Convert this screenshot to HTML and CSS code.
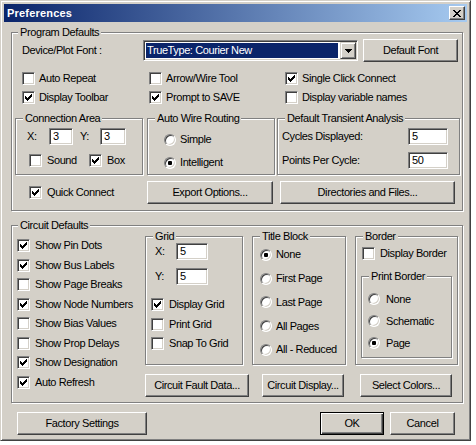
FILE: index.html
```html
<!DOCTYPE html>
<html>
<head>
<meta charset="utf-8">
<title>Preferences</title>
<link rel="stylesheet" href="styles.css">
</head>
<body>
<div class="window">
  <div class="titlebar">
    <span class="title">Preferences</span>
    <span class="close"><svg width="8" height="7" viewBox="0 0 8 7" shape-rendering="crispEdges"><path d="M0 0h2v1h-2zM6 0h2v1h-2zM1 1h2v1h-2zM5 1h2v1h-2zM2 2h4v1h-4zM3 3h2v1h-2zM2 4h4v1h-4zM1 5h2v1h-2zM5 5h2v1h-2zM0 6h2v1h-2zM6 6h2v1h-2z" fill="#000"/></svg></span>
  </div>
  <div class="client">
    <fieldset class="group program">
      <legend>Program Defaults</legend>
      <div class="font-row">
        <span class="font-label">Device/Plot Font :</span>
        <div class="combo">
          <span class="combo-value">TrueType: Courier New</span>
          <span class="combo-btn"><svg width="7" height="4" viewBox="0 0 7 4" shape-rendering="crispEdges"><path d="M0 0h7v1h-7zM1 1h5v1h-5zM2 2h3v1h-3zM3 3h1v1h-1z" fill="#000"/></svg></span>
        </div>
        <button class="btn btn-default-font">Default Font</button>
      </div>
      <div class="check-grid">
        <label class="check"><span class="cb"></span>Auto Repeat</label>
        <label class="check"><span class="cb"></span>Arrow/Wire Tool</label>
        <label class="check"><span class="cb on"><svg width="7" height="7" viewBox="0 0 7 7" shape-rendering="crispEdges"><path d="M6 0h1v1h-1zM5 1h2v1h-2zM0 2h1v1h-1zM4 2h3v1h-3zM0 3h2v1h-2zM3 3h3v1h-3zM0 4h5v1h-5zM1 5h3v1h-3zM2 6h1v1h-1z"/></svg></span>Single Click Connect</label>
        <label class="check"><span class="cb on"><svg width="7" height="7" viewBox="0 0 7 7" shape-rendering="crispEdges"><path d="M6 0h1v1h-1zM5 1h2v1h-2zM0 2h1v1h-1zM4 2h3v1h-3zM0 3h2v1h-2zM3 3h3v1h-3zM0 4h5v1h-5zM1 5h3v1h-3zM2 6h1v1h-1z"/></svg></span>Display Toolbar</label>
        <label class="check"><span class="cb on"><svg width="7" height="7" viewBox="0 0 7 7" shape-rendering="crispEdges"><path d="M6 0h1v1h-1zM5 1h2v1h-2zM0 2h1v1h-1zM4 2h3v1h-3zM0 3h2v1h-2zM3 3h3v1h-3zM0 4h5v1h-5zM1 5h3v1h-3zM2 6h1v1h-1z"/></svg></span>Prompt to SAVE</label>
        <label class="check"><span class="cb"></span>Display variable names</label>
      </div>
      <div class="sub-row">
        <fieldset class="group conn">
          <legend>Connection Area</legend>
          <div class="xy-row">
            <span class="xy-x">X:</span><span class="edit e-cx">3</span>
            <span class="xy-y">Y:</span><span class="edit e-cy">3</span>
          </div>
          <div class="sb-row">
            <label class="check sound"><span class="cb"></span>Sound</label>
            <label class="check"><span class="cb on"><svg width="7" height="7" viewBox="0 0 7 7" shape-rendering="crispEdges"><path d="M6 0h1v1h-1zM5 1h2v1h-2zM0 2h1v1h-1zM4 2h3v1h-3zM0 3h2v1h-2zM3 3h3v1h-3zM0 4h5v1h-5zM1 5h3v1h-3zM2 6h1v1h-1z"/></svg></span>Box</label>
          </div>
        </fieldset>
        <fieldset class="group wire">
          <legend>Auto Wire Routing</legend>
          <div class="wire-body">
            <label class="radio-item"><span class="rb"></span>Simple</label>
            <label class="radio-item"><span class="rb on"><span class="dot"></span></span>Intelligent</label>
          </div>
        </fieldset>
        <fieldset class="group trans">
          <legend>Default Transient Analysis</legend>
          <div class="trans-body">
            <span>Cycles Displayed:</span><span class="edit">5</span>
            <span>Points Per Cycle:</span><span class="edit">50</span>
          </div>
        </fieldset>
      </div>
      <div class="action-row">
        <label class="check quick"><span class="cb on"><svg width="7" height="7" viewBox="0 0 7 7" shape-rendering="crispEdges"><path d="M6 0h1v1h-1zM5 1h2v1h-2zM0 2h1v1h-1zM4 2h3v1h-3zM0 3h2v1h-2zM3 3h3v1h-3zM0 4h5v1h-5zM1 5h3v1h-3zM2 6h1v1h-1z"/></svg></span>Quick Connect</label>
        <button class="btn btn-export">Export Options...</button>
        <button class="btn btn-dirs">Directories and Files...</button>
      </div>
    </fieldset>

    <fieldset class="group circuit">
      <legend>Circuit Defaults</legend>
      <div class="circ-main">
        <div class="checklist">
          <label class="check"><span class="cb on"><svg width="7" height="7" viewBox="0 0 7 7" shape-rendering="crispEdges"><path d="M6 0h1v1h-1zM5 1h2v1h-2zM0 2h1v1h-1zM4 2h3v1h-3zM0 3h2v1h-2zM3 3h3v1h-3zM0 4h5v1h-5zM1 5h3v1h-3zM2 6h1v1h-1z"/></svg></span>Show Pin Dots</label>
          <label class="check"><span class="cb on"><svg width="7" height="7" viewBox="0 0 7 7" shape-rendering="crispEdges"><path d="M6 0h1v1h-1zM5 1h2v1h-2zM0 2h1v1h-1zM4 2h3v1h-3zM0 3h2v1h-2zM3 3h3v1h-3zM0 4h5v1h-5zM1 5h3v1h-3zM2 6h1v1h-1z"/></svg></span>Show Bus Labels</label>
          <label class="check"><span class="cb"></span>Show Page Breaks</label>
          <label class="check"><span class="cb on"><svg width="7" height="7" viewBox="0 0 7 7" shape-rendering="crispEdges"><path d="M6 0h1v1h-1zM5 1h2v1h-2zM0 2h1v1h-1zM4 2h3v1h-3zM0 3h2v1h-2zM3 3h3v1h-3zM0 4h5v1h-5zM1 5h3v1h-3zM2 6h1v1h-1z"/></svg></span>Show Node Numbers</label>
          <label class="check"><span class="cb"></span>Show Bias Values</label>
          <label class="check"><span class="cb"></span>Show Prop Delays</label>
          <label class="check"><span class="cb on"><svg width="7" height="7" viewBox="0 0 7 7" shape-rendering="crispEdges"><path d="M6 0h1v1h-1zM5 1h2v1h-2zM0 2h1v1h-1zM4 2h3v1h-3zM0 3h2v1h-2zM3 3h3v1h-3zM0 4h5v1h-5zM1 5h3v1h-3zM2 6h1v1h-1z"/></svg></span>Show Designation</label>
          <label class="check"><span class="cb on"><svg width="7" height="7" viewBox="0 0 7 7" shape-rendering="crispEdges"><path d="M6 0h1v1h-1zM5 1h2v1h-2zM0 2h1v1h-1zM4 2h3v1h-3zM0 3h2v1h-2zM3 3h3v1h-3zM0 4h5v1h-5zM1 5h3v1h-3zM2 6h1v1h-1z"/></svg></span>Auto Refresh</label>
        </div>
        <div class="circ-right">
          <div class="circ-groups">
            <fieldset class="group grid-box">
              <legend>Grid</legend>
              <div class="gxy-row"><span class="gxy-l">X:</span><span class="edit e-g">5</span></div>
              <div class="gxy-row second"><span class="gxy-l">Y:</span><span class="edit e-g">5</span></div>
              <div class="grid-checks">
                <label class="check"><span class="cb on"><svg width="7" height="7" viewBox="0 0 7 7" shape-rendering="crispEdges"><path d="M6 0h1v1h-1zM5 1h2v1h-2zM0 2h1v1h-1zM4 2h3v1h-3zM0 3h2v1h-2zM3 3h3v1h-3zM0 4h5v1h-5zM1 5h3v1h-3zM2 6h1v1h-1z"/></svg></span>Display Grid</label>
                <label class="check"><span class="cb"></span>Print Grid</label>
                <label class="check"><span class="cb"></span>Snap To Grid</label>
              </div>
            </fieldset>
            <fieldset class="group title-box">
              <legend>Title Block</legend>
              <div class="title-body">
                <label class="radio-item"><span class="rb on"><span class="dot"></span></span>None</label>
                <label class="radio-item"><span class="rb"></span>First Page</label>
                <label class="radio-item"><span class="rb"></span>Last Page</label>
                <label class="radio-item"><span class="rb"></span>All Pages</label>
                <label class="radio-item"><span class="rb"></span>All - Reduced</label>
              </div>
            </fieldset>
            <fieldset class="group border-box">
              <legend>Border</legend>
              <label class="check disp-border"><span class="cb"></span>Display Border</label>
              <fieldset class="group print-border">
                <legend>Print Border</legend>
                <div class="print-body">
                  <label class="radio-item"><span class="rb"></span>None</label>
                  <label class="radio-item"><span class="rb"></span>Schematic</label>
                  <label class="radio-item"><span class="rb on"><span class="dot"></span></span>Page</label>
                </div>
              </fieldset>
            </fieldset>
          </div>
          <div class="circ-btns">
            <button class="btn btn-fault">Circuit Fault Data...</button>
            <button class="btn btn-display">Circuit Display...</button>
            <button class="btn btn-colors">Select Colors...</button>
          </div>
        </div>
      </div>
    </fieldset>

    <div class="footer">
      <button class="btn btn-factory">Factory Settings</button>
      <button class="btn btn-ok">OK</button>
      <button class="btn btn-cancel">Cancel</button>
    </div>
  </div>
</div>
</body>
</html>
```

FILE: styles.css
```css
* { box-sizing: border-box; }
html, body { margin: 0; padding: 0; background: #fff; }
body {
  font: 11px/13px "Liberation Sans", Arial, sans-serif;
  letter-spacing: -0.4px;
  color: #000;
}

.window {
  width: 471px;
  height: 441px;
  background: #d4d0c8;
  border: 1px solid;
  border-color: #d4d0c8 #404040 #404040 #d4d0c8;
  box-shadow: inset 1px 1px #fff, inset -1px -1px #808080;
  padding: 3px;
  display: flex;
  flex-direction: column;
}

.titlebar {
  height: 18px;
  flex: none;
  background: linear-gradient(to right, #0a246a, #a6caf0);
  display: flex;
  align-items: center;
  justify-content: space-between;
  padding: 0 2px 0 3px;
}
.title { color: #fff; font-weight: bold; letter-spacing: 0.2px; }
.close {
  width: 16px;
  height: 14px;
  background: #d4d0c8;
  border: 1px solid;
  border-color: #fff #404040 #404040 #fff;
  box-shadow: inset -1px -1px #808080;
  display: flex;
  align-items: center;
  justify-content: center;
  padding-right: 1px;
}
.close svg { display: block; }

.client {
  flex: 1;
  padding: 4px 12px 0 7px;
  display: flex;
  flex-direction: column;
}

/* group boxes */
.group {
  margin: 0;
  padding: 0;
  border: 1px solid #808080;
  box-shadow: inset 1px 1px #fff, 1px 1px #fff;
  min-width: 0;
}
.group > legend {
  padding: 0 2px;
  margin-left: 7px;
  background: #d4d0c8;
  line-height: 13px;
}
.program > legend, .circuit > legend { margin-left: 6px; }

/* buttons */
.btn {
  height: 23px;
  flex: none;
  font: inherit;
  letter-spacing: inherit;
  color: #000;
  background: #d4d0c8;
  border: 1px solid;
  border-color: #fff #404040 #404040 #fff;
  box-shadow: inset -1px -1px #808080;
  padding: 0;
  margin: 0;
  text-align: center;
}

/* checkboxes */
.check { display: flex; align-items: center; gap: 5px; white-space: nowrap; }
.cb {
  width: 13px;
  height: 13px;
  flex: none;
  background: #fff;
  border: 1px solid;
  border-color: #808080 #fff #fff #808080;
  box-shadow: inset 1px 1px #404040, inset -1px -1px #d4d0c8;
  display: flex;
  align-items: center;
  justify-content: center;
}
.cb svg { display: block; }

/* radios */
.radio-item { display: flex; align-items: center; gap: 4px; white-space: nowrap; }
.rb {
  width: 12px;
  height: 12px;
  flex: none;
  border-radius: 50%;
  background: #fff;
  border: 1px solid;
  border-color: #808080 #fff #fff #808080;
  box-shadow: inset 1px 1px #404040, inset -1px -1px #d4d0c8;
  display: flex;
  align-items: center;
  justify-content: center;
}
.dot { width: 4px; height: 4px; border-radius: 1px; background: #000; }

/* edit fields */
.edit {
  height: 17px;
  flex: none;
  background: #fff;
  border: 1px solid;
  border-color: #808080 #fff #fff #808080;
  box-shadow: inset 1px 1px #404040, inset -1px -1px #d4d0c8;
  padding-left: 3px;
  display: flex;
  align-items: center;
}

/* program defaults */
.program { width: 452px; padding-bottom: 6px; flex: none; }
.font-row { display: flex; align-items: center; height: 23px; padding-left: 10px; }
.font-label { width: 121px; flex: none; }
.combo {
  width: 215px;
  height: 21px;
  flex: none;
  background: #fff;
  border: 1px solid;
  border-color: #808080 #fff #fff #808080;
  box-shadow: inset 1px 1px #404040, inset -1px -1px #d4d0c8;
  padding: 1px;
  display: flex;
}
.combo-value {
  flex: 1;
  margin: 1px 2px 1px 1px;
  background: #0a246a;
  color: #fff;
  padding-left: 1px;
  display: flex;
  align-items: center;
}
.combo-btn {
  width: 16px;
  height: 17px;
  background: #d4d0c8;
  border: 1px solid;
  border-color: #d4d0c8 #404040 #404040 #d4d0c8;
  box-shadow: inset 1px 1px #fff, inset -1px -1px #808080;
  display: flex;
  align-items: center;
  justify-content: center;
}
.combo-btn svg { display: block; }
.btn-default-font { width: 95px; margin-left: 5px; }

.check-grid {
  display: grid;
  grid-template-columns: 127px 136px 1fr;
  grid-auto-rows: 19px;
  margin: 7px 0 0 10px;
}
.check-grid .check { gap: 4px; }

.sub-row { display: flex; margin: 5px 0 0 3px; }
.conn { width: 128px; height: 63px; }
.wire { width: 128px; height: 63px; margin-left: 4px; }
.trans { width: 183px; height: 63px; margin-left: 2px; }

.xy-row { display: flex; align-items: center; height: 17px; margin: 3px 0 0 11px; }
.xy-x { width: 22px; }
.xy-y { width: 20px; margin-left: 7px; }
.e-cx { width: 24px; }
.e-cy { width: 26px; }
.sb-row { display: flex; align-items: center; height: 19px; margin: 6px 0 0 13px; }
.sound { width: 60px; }

.wire-body {
  display: grid;
  grid-auto-rows: 19px;
  row-gap: 4px;
  padding: 5px 0 0 16px;
}

.trans-body {
  display: grid;
  grid-template-columns: 126px 40px;
  grid-auto-rows: 17px;
  row-gap: 7px;
  align-items: center;
  padding: 3px 0 0 4px;
}

.action-row { display: flex; align-items: center; height: 23px; margin: 6px 0 0 17px; }
.quick { width: 118px; }
.btn-export { width: 126px; }
.btn-dirs { width: 175px; margin-left: 7px; }

/* circuit defaults */
.circuit { width: 452px; margin-top: 8px; padding-bottom: 5px; flex: none; }
.circ-main { display: grid; grid-template-columns: 133px auto; }
.checklist {
  display: grid;
  grid-auto-rows: 19.5px;
  padding: 4px 0 0 5px;
}
.circ-right { margin-top: -2px; }
.circ-groups { display: flex; }
.grid-box { width: 98px; height: 135px; }
.title-box { width: 94px; height: 135px; margin-left: 9px; }
.border-box { width: 103px; height: 135px; margin-left: 9px; }

.gxy-row { display: flex; align-items: center; height: 17px; padding-left: 9px; }
.gxy-row.second { margin-top: 8px; }
.gxy-l { width: 21px; }
.e-g { width: 32px; }
.grid-checks {
  display: grid;
  grid-auto-rows: 19.5px;
  margin-top: 10px;
  padding-left: 5px;
}

.title-body {
  display: grid;
  grid-auto-rows: 23.75px;
  padding-left: 7px;
}

.disp-border { height: 19px; margin: 1px 0 0 6px; }
.print-border { width: 91px; height: 88px; margin: 7px 0 0 5px; }
.print-body {
  display: grid;
  grid-auto-rows: 22px;
  padding: 5px 0 0 6px;
}
.print-body .radio-item { gap: 6px; }

.circ-btns { display: flex; margin-top: 9px; }
.btn-fault { width: 104px; }
.btn-display { width: 82px; margin-left: 13px; }
.btn-colors { width: 92px; margin-left: 16px; }

/* footer */
.footer { display: flex; align-items: center; margin-top: 9px; }
.btn-factory { width: 130px; margin-left: 6px; }
.btn-ok {
  width: 64px;
  margin-left: auto;
  border: 1px solid #000;
  box-shadow: inset 1px 1px #fff, inset -1px -1px #404040, inset -2px -2px #808080;
}
.btn-cancel { width: 65px; margin-left: 6px; }
```
